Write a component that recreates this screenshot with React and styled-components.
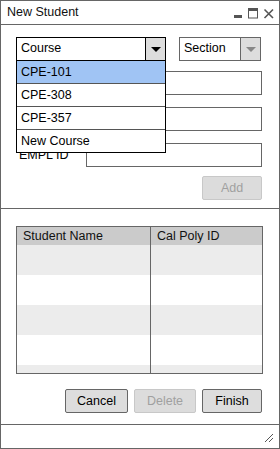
import React from 'react'
import styled, {createGlobalStyle} from 'styled-components'

const GlobalStyle = createGlobalStyle`
  html, body {
    margin: 0;
    padding: 0;
    background: #fff;
  }
  * {
    box-sizing: border-box;
  }
  body {
    font-family: "Liberation Sans", Arial, sans-serif;
    font-size: 12.5px;
    color: #000;
  }
`

const courses = ['CPE-101', 'CPE-308', 'CPE-357', 'New Course']
// the first two labels sit under the open dropdown, so only the last one shows
const fields = ['', '', 'EMPL ID']
const rows = [0, 1, 2, 3, 4]

function Arrow({color}) {
  return (
    <svg width="10" height="5" viewBox="0 0 10 5">
      <polygon points="0,0 10,0 5,5" fill={color} />
    </svg>
  )
}

function App() {
  return (
    <>
      <GlobalStyle />
      <Window>
        <TitleBar>
          <Title>New Student</Title>
          <svg width="44" height="24" viewBox="0 0 44 24">
            <rect x="3" y="14" width="8" height="3" fill="#555" />
            <rect x="17.5" y="7.5" width="9" height="9.5" fill="none" stroke="#555" strokeWidth="1" />
            <rect x="17" y="7" width="10" height="3" fill="#555" />
            <path d="M33.5 8.5 L42 17 M42 8.5 L33.5 17" stroke="#555" strokeWidth="1.6" />
          </svg>
        </TitleBar>

        <FormSection>
          <ComboRow>
            <ComboWrap>
              <Combo $width={150} $focused>
                <ComboText>Course</ComboText>
                <ComboButton $focused><Arrow color="#000" /></ComboButton>
              </Combo>
              <DropList>
                {courses.map((c, i) => (
                  <DropItem key={c} $selected={i === 0}>{c}</DropItem>
                ))}
              </DropList>
            </ComboWrap>
            <Combo $width={82}>
              <ComboText>Section</ComboText>
              <ComboButton><Arrow color="#888" /></ComboButton>
            </Combo>
          </ComboRow>

          {fields.map((f, i) => (
            <FieldRow key={i}>
              <Label>{f}</Label>
              <Input />
            </FieldRow>
          ))}

          <ActionRow>
            <Button disabled $width={60}>Add</Button>
          </ActionRow>
        </FormSection>

        <TableSection>
          <Table>
            <HeaderRow>
              <Cell $first>Student Name</Cell>
              <Cell>Cal Poly ID</Cell>
            </HeaderRow>
            {rows.map(r => (
              <Row key={r} $shaded={r % 2 === 0}>
                <Cell $first />
                <Cell />
              </Row>
            ))}
          </Table>
          <ButtonRow>
            <Button $width={63}>Cancel</Button>
            <Button disabled $width={62}>Delete</Button>
            <Button $width={60}>Finish</Button>
          </ButtonRow>
        </TableSection>

        <StatusBar>
          <svg width="10" height="10" viewBox="0 0 10 10">
            <path d="M1 9 L9 1 M5 9 L9 5" stroke="#555" strokeWidth="1" />
          </svg>
        </StatusBar>
      </Window>
    </>
  )
}

const Window = styled.div`
  width: 280px;
  height: 449px;
  border: 1px solid #666;
  display: flex;
  flex-direction: column;
  background: #fff;
`

const TitleBar = styled.div`
  height: 24px;
  flex: none;
  border-bottom: 1px solid #666;
  display: flex;
  align-items: center;
  justify-content: space-between;
  padding: 0 4px 0 6px;
`

const Title = styled.span`
  font-size: 12.5px;
  color: #111;
  margin-top: -1px;
`

const FormSection = styled.div`
  flex: none;
  height: 184px;
  border-bottom: 1px solid #666;
  padding: 12px 17px 8px 15px;
`

const ComboRow = styled.div`
  display: flex;
  justify-content: space-between;
  align-items: flex-start;
  padding-right: 1px;
  margin-bottom: 10px;
`

const ComboWrap = styled.div`
  position: relative;
`

const Combo = styled.div`
  width: ${p => p.$width}px;
  height: 24px;
  border: 1px solid ${p => (p.$focused ? '#000' : '#666')};
  display: flex;
  background: #fff;
`

const ComboText = styled.span`
  flex: 1;
  padding-left: 4px;
  line-height: 21px;
`

const ComboButton = styled.div`
  width: 20px;
  border-left: 1px solid ${p => (p.$focused ? '#000' : '#666')};
  background: #ddd;
  display: flex;
  align-items: center;
  justify-content: center;
  padding-top: 1px;
`

const DropList = styled.div`
  position: absolute;
  left: 0;
  top: 23px;
  width: 150px;
  border: 1px solid #000;
  background: #fff;
  z-index: 2;
`

const DropItem = styled.div`
  height: 23px;
  line-height: 22px;
  padding-left: 4px;
  background: ${p => (p.$selected ? '#a0c4f4' : '#fff')};
  border-bottom: 1px solid #555;
  &:last-child {
    height: 22px;
    border-bottom: none;
  }
`

const FieldRow = styled.div`
  display: flex;
  align-items: center;
  height: 24px;
  margin-bottom: 12px;
  &:nth-of-type(4) {
    margin-bottom: 9px;
  }
`

const Label = styled.span`
  width: 70px;
  padding-left: 3px;
  flex: none;
`

const Input = styled.div`
  flex: 1;
  height: 24px;
  border: 1px solid #666;
  background: #fff;
`

const ActionRow = styled.div`
  display: flex;
  justify-content: flex-end;
`

const Button = styled.button`
  width: ${p => p.$width}px;
  height: 24px;
  padding: 0;
  font-family: "Liberation Sans", Arial, sans-serif;
  font-size: 12.5px;
  color: #000;
  background: #ddd;
  border: 1px solid #666;
  border-radius: 2px;
  &:disabled {
    color: #a0a0a0;
    border-color: #c8c8c8;
    background: #dcdcdc;
  }
`

const TableSection = styled.div`
  flex: none;
  height: 215px;
  padding: 17px 16px 11px 15px;
`

const Table = styled.div`
  height: 148px;
  border: 1px solid #666;
  overflow: hidden;
`

const HeaderRow = styled.div`
  display: flex;
  height: 18px;
  background: #cbcbcb;
`

const Row = styled.div`
  display: flex;
  height: 30px;
  background: ${p => (p.$shaded ? '#ececec' : '#fff')};
`

const Cell = styled.div`
  width: ${p => (p.$first ? '134px' : 'auto')};
  flex: ${p => (p.$first ? 'none' : '1')};
  border-right: ${p => (p.$first ? '1px solid #666' : 'none')};
  padding-left: 6px;
  line-height: 18px;
  color: #111;
`

const ButtonRow = styled.div`
  display: flex;
  justify-content: flex-end;
  gap: 6px;
  margin-top: 15px;
  padding-right: 1px;
`

const StatusBar = styled.div`
  flex: 1;
  border-top: 1px solid #666;
  display: flex;
  align-items: flex-end;
  justify-content: flex-end;
  padding: 0 5px 5px 0;
`

export default App
